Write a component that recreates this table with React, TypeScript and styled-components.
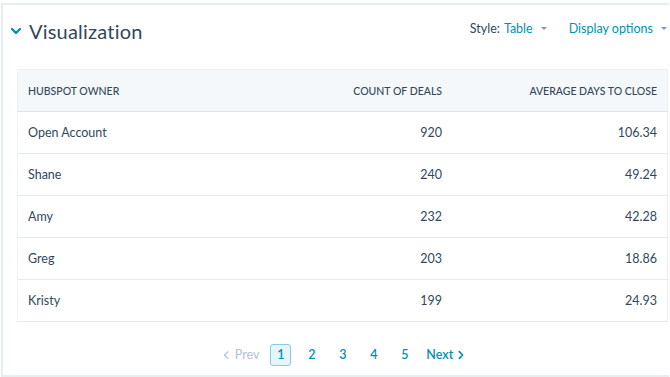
import React from 'react';
import styled, { createGlobalStyle } from 'styled-components';

const GlobalStyle = createGlobalStyle`
  body {
    margin: 0;
    background: #ffffff;
    font-family: Lato, 'Open Sans', sans-serif;
    color: #33475b;
  }
`;

const Card = styled.section`
  box-sizing: border-box;
  width: 668px;
  height: 374px;
  margin: 3px 0 0 1px;
  border: 2px solid #e5eff2;
  border-right: none;
  padding: 0 0 0 14px;
  display: flex;
  flex-direction: column;
`;

const TopBar = styled.header`
  height: 52px;
  margin: 0 0 12px -7px;
  display: flex;
  align-items: center;
  justify-content: space-between;
  padding-right: 2px;
`;

const Title = styled.h2`
  margin: 0;
  display: flex;
  align-items: center;
  gap: 7px;
  font-size: 20px;
  font-weight: 400;
  color: #33475b;
  letter-spacing: 0.2px;
`;

const Controls = styled.div`
  display: flex;
  align-items: center;
  gap: 22px;
  font-size: 12.5px;
  margin-top: -6px;
`;

const Control = styled.span`
  display: flex;
  align-items: center;
  gap: 4px;
`;

const Label = styled.span`
  color: #33475b;
`;

const LinkText = styled.span`
  color: #0091ae;
`;

const Caret = styled.span`
  width: 0;
  height: 0;
  border-left: 3px solid transparent;
  border-right: 3px solid transparent;
  border-top: 3px solid #7c98b6;
  margin-left: 4px;
`;

const Table = styled.table`
  width: 651px;
  table-layout: fixed;
  border-collapse: collapse;
  border: 1px solid #eaf0f6;
  font-size: 12.5px;
`;

const Th = styled.th<{ $align?: string; $w?: number }>`
  background: #f5f8fa;
  height: 41px;
  padding: 0 10px;
  font-size: 10.5px;
  font-weight: 500;
  text-transform: uppercase;
  color: #33475b;
  text-align: ${(p) => p.$align || 'left'};
  width: ${(p) => (p.$w ? `${p.$w}px` : 'auto')};
  border-bottom: 1px solid #dfe3eb;
`;

const Td = styled.td<{ $align?: string }>`
  height: 41px;
  padding: 0 10px;
  text-align: ${(p) => p.$align || 'left'};
  border-bottom: 1px solid #e6eaf0;
  color: #33475b;
`;

const Pager = styled.nav`
  flex: 1;
  display: flex;
  align-items: center;
  justify-content: center;
  gap: 10px;
  font-size: 12.5px;
  padding: 12px 0 0 2px;
`;

const PageLink = styled.span<{ $active?: boolean; $disabled?: boolean }>`
  display: flex;
  align-items: center;
  justify-content: center;
  gap: 3px;
  min-width: 19px;
  height: 20px;
  border-radius: 3px;
  color: ${(p) => (p.$disabled ? '#b0c1d4' : '#0091ae')};
  background: ${(p) => (p.$active ? '#e5f5f8' : 'transparent')};
  border: 1px solid ${(p) => (p.$active ? '#7fd1de' : 'transparent')};
  font-weight: ${(p) => (p.$disabled ? 400 : 600)};
`;

const Chevron = ({ dir, color }: { dir: 'left' | 'right' | 'down'; color: string }) => {
  const d =
    dir === 'left' ? 'M7 2 L3 6 L7 10' : dir === 'right' ? 'M4 2 L8 6 L4 10' : 'M2 4 L6 8 L10 4';
  return (
    <svg width={dir === 'down' ? 12 : 10} height="12" viewBox="0 0 12 12" fill="none">
      <path
        d={d}
        stroke={color}
        strokeWidth={dir === 'down' ? 2.4 : dir === 'right' ? 2 : 1.5}
        strokeLinecap="round"
        strokeLinejoin="round"
      />
    </svg>
  );
};

const rows = [
  { owner: 'Open Account', count: 920, avg: '106.34' },
  { owner: 'Shane', count: 240, avg: '49.24' },
  { owner: 'Amy', count: 232, avg: '42.28' },
  { owner: 'Greg', count: 203, avg: '18.86' },
  { owner: 'Kristy', count: 199, avg: '24.93' },
];

export default function App() {
  return (
    <>
      <GlobalStyle />
      <Card>
        <TopBar>
          <Title>
            <Chevron dir="down" color="#0091ae" />
            Visualization
          </Title>
          <Controls>
            <Control>
              <Label>Style:</Label>
              <LinkText>Table</LinkText>
              <Caret />
            </Control>
            <Control>
              <LinkText>Display options</LinkText>
              <Caret />
            </Control>
          </Controls>
        </TopBar>
        <Table>
          <thead>
            <tr>
              <Th>HubSpot Owner</Th>
              <Th $align="right" $w={132}>Count of deals</Th>
              <Th $align="right" $w={195}>Average days to close</Th>
            </tr>
          </thead>
          <tbody>
            {rows.map((r) => (
              <tr key={r.owner}>
                <Td>{r.owner}</Td>
                <Td $align="right">{r.count}</Td>
                <Td $align="right">{r.avg}</Td>
              </tr>
            ))}
          </tbody>
        </Table>
        <Pager>
          <PageLink $disabled>
            <Chevron dir="left" color="#b0c1d4" />
            Prev
          </PageLink>
          <PageLink $active>1</PageLink>
          <PageLink>2</PageLink>
          <PageLink>3</PageLink>
          <PageLink>4</PageLink>
          <PageLink>5</PageLink>
          <PageLink>
            Next
            <Chevron dir="right" color="#0091ae" />
          </PageLink>
        </Pager>
      </Card>
    </>
  );
}
